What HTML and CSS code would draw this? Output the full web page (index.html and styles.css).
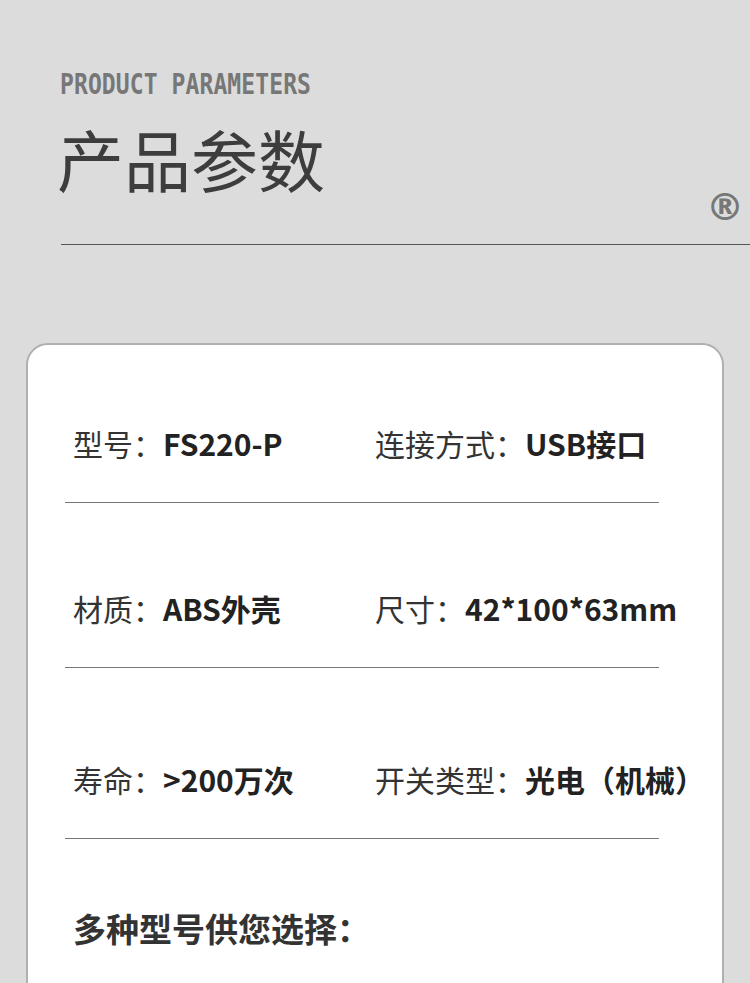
FILE: index.html
```html
<!DOCTYPE html>
<html lang="zh-CN">
  <head>
    <meta charset="UTF-8" />
    <meta name="viewport" content="width=device-width, initial-scale=1.0" />
    <title>产品参数</title>
    <link rel="stylesheet" href="styles.css">
  </head>
  <body>
    <div class="page-head">
      <div class="eyebrow">PRODUCT PARAMETERS</div>
      <div class="title-row">
        <h1>产品参数</h1>
        <span class="reg">®</span>
      </div>
    </div>
    <div class="head-line"></div>

    <div class="card">
      <div class="spec-list">
        <div class="spec-row">
          <div class="spec"><span class="label">型号：</span><span class="value">FS220-P</span></div>
          <div class="spec"><span class="label">连接方式：</span><span class="value">USB接口</span></div>
        </div>
        <div class="spec-row">
          <div class="spec"><span class="label">材质：</span><span class="value">ABS外壳</span></div>
          <div class="spec"><span class="label">尺寸：</span><span class="value">42*100*63mm</span></div>
        </div>
        <div class="spec-row">
          <div class="spec"><span class="label">寿命：</span><span class="value">&gt;200万次</span></div>
          <div class="spec"><span class="label">开关类型：</span><span class="value">光电（机械）</span></div>
        </div>
      </div>
      <h2 class="models">多种型号供您选择：</h2>
    </div>
  </body>
</html>
```

FILE: styles.css
```css
body {
  margin: 0;
  background: #dcdcdc;
  font-family: "Noto Sans CJK SC", "Noto Sans", sans-serif;
  color: #333;
  overflow: hidden;
}

.page-head {
  padding: 68px 0 0 60px;
}

.eyebrow {
  font-family: "DejaVu Sans Mono", monospace;
  font-weight: bold;
  font-size: 23px;
  line-height: 28px;
  color: #777;
  transform: scaleY(1.2);
  transform-origin: left top;
  letter-spacing: 0.1px;
}

.title-row {
  display: flex;
  justify-content: space-between;
  align-items: flex-end;
  margin-top: 22px;
}

h1 {
  margin: 0 0 0 -3px;
  font-size: 67px;
  line-height: 80px;
  font-weight: 400;
  color: #3d3d3d;
}

.reg {
  font-family: "DejaVu Sans", sans-serif;
  font-weight: bold;
  font-size: 38px;
  line-height: 34px;
  color: #777;
  margin: 0 6px -26px 0;
}

.head-line {
  height: 1px;
  background: #555;
  margin: 46px 0 0 61px;
}

.card {
  margin: 98px 26px 0 26px;
  background: #fff;
  border: 2px solid #b0b0b0;
  border-radius: 22px;
  padding: 0 0 200px;
}

.spec-list {
  margin-left: 37px;
  width: 594px;
}

.spec-row {
  display: flex;
  padding: 85px 0 39px 8px;
  border-bottom: 1px solid #777;
}

.spec-row:first-child {
  padding-top: 78px;
}

.spec-row:last-child {
  padding-top: 91px;
}

.spec {
  font-size: 30px;
  line-height: 40px;
  white-space: nowrap;
}

.spec:first-child {
  width: 302px;
  flex-shrink: 0;
}

.label {
  color: #333;
}

.value {
  font-weight: bold;
  color: #222;
}

.models {
  margin: 69px 0 0 45px;
  font-size: 33px;
  line-height: 40px;
  font-weight: bold;
  color: #333;
}
```
